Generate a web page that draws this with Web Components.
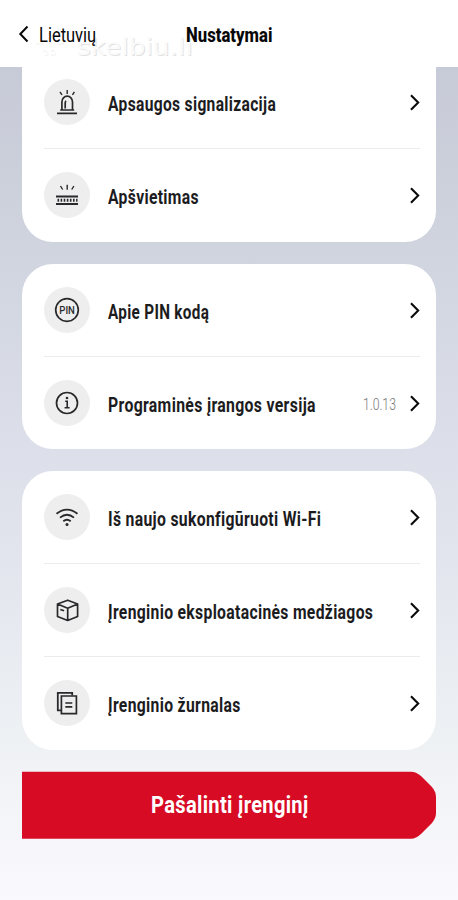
<!DOCTYPE html>
<html lang="lt">
<head>
<meta charset="utf-8">
<title>Nustatymai</title>
<style>
body{margin:0;font-family:Roboto,"Liberation Sans",sans-serif;color:#1c1c1e;font-variant-ligatures:none}
</style>
</head>
<body>
<settings-screen></settings-screen>
<script>
// Single-line text condensed horizontally to a given width.
class FitText extends HTMLElement{
  connectedCallback(){
    const w=parseFloat(this.getAttribute('width'));
    const root=this.attachShadow({mode:'open'});
    root.innerHTML=`<style>:host{display:block;flex:none;white-space:nowrap;width:${w}px}
      span{display:inline-block;transform-origin:0 50%}</style><span><slot></slot></span>`;
    const s=root.querySelector('span');
    s.style.transform=`scaleX(${w/s.offsetWidth})`;
  }
}
customElements.define('fit-text',FitText);

const icons={
  back:'<path d="M17.500 3.5 10.300 11l7.200 7.500" stroke-width="2"/>',
  next:'<path d="M8 4.2 15.2 11.500 8 18.8" stroke-width="2.1"/>',
  alarm:'<path d="M6 27.300h20" stroke-width="1.800"/><path d="M9.200 24h14M10.900 24V16a5.300 5.800 0 0 1 10.600 0V24M14.200 22.500v-5.500q0-1.500 1-2" stroke-width="1.700"/><path d="M16.200 4v4M9 6l2 2.800M23.400 6l-2 2.800" stroke-width="1.400"/>',
  light:'<path d="M5 17.500h22M5 25h22" stroke-width="1.900"/><path d="M6.500 21.300h20" stroke-width="3" stroke-dasharray="1.600 1.500"/><path d="M9.500 7l2.200 3.500M16.200 5.800v5M22.900 7l-2.200 3.500" stroke-width="1.400"/>',
  pin:'<circle cx="16" cy="16" r="11.300" stroke-width="1.700"/><text x="8.300" y="20" textLength="15.600" lengthAdjust="spacingAndGlyphs" font-family="Roboto" font-weight="500" font-size="11.500" fill="currentColor" stroke="none">PIN</text>',
  info:'<circle cx="16" cy="16" r="10.500" stroke-width="1.700"/><path d="M14.200 14.300h2v6.200M13.600 20.700h5" stroke-width="1.600"/><circle cx="16" cy="11" r="1.300" fill="currentColor" stroke="none"/>',
  wifi:'<path d="M5.500 12.700q10.500-8.200 21 0M9 16.600q7-5.800 14 0M12.300 20.200q3.700-3 7.400 0" stroke-width="1.800"/><circle cx="16" cy="23.400" r="1.500" fill="currentColor" stroke="none"/>',
  box:'<path d="M16.700 6.200 26.600 10v12.500L16.700 26.500 6.500 22.500V10zM6.500 10l10.200 4.300L26.600 10M16.700 14.300v12.200M9.300 15.500l3.800 1.300" stroke-width="1.700" stroke-linejoin="round"/>',
  log:'<path d="M10 23.300H6.800V5.800h14.400v2.700" stroke-width="1.800"/><path d="M10.400 9h15v17.700h-15zM14.300 16h7M14.300 19.800h7" stroke-width="1.700"/>'
};
class UiIcon extends HTMLElement{
  connectedCallback(){
    const n=this.getAttribute('name'),v=(n==='next'||n==='back')?23:32;
    this.attachShadow({mode:'open'}).innerHTML=`<style>:host{display:block;flex:none;width:${v}px;height:${v}px}svg{display:block}</style>
    <svg width="${v}" height="${v}" viewBox="0 0 ${v} ${v}" fill="none" stroke="currentColor">${icons[n]}</svg>`;
  }
}
customElements.define('ui-icon',UiIcon);

class SettingsRow extends HTMLElement{
  connectedCallback(){
    this.attachShadow({mode:'open'}).innerHTML=`<style>
    :host{display:flex;box-sizing:border-box;height:93px;align-items:flex-start;border-bottom:1.500px solid #ececee}
    :host(:last-child){border-bottom:0}
    .disc{width:46px;height:46px;margin:23px 18px 0 0;border-radius:50%;background:#eee;display:grid;place-items:center;flex:none;color:#29292c}
    .label{font-size:19.500px;line-height:24px;font-weight:700;letter-spacing:.4px;padding-top:37px;flex:1}
    .value{font-size:17px;line-height:24px;font-weight:300;color:#777;padding:35px 7px 0 0}
    .next{padding-top:35px;margin-right:-6px;color:#0c0c0e}
    </style>
    <div class="disc"><ui-icon name="${this.getAttribute('icon')}"></ui-icon></div>
    <div class="label"><slot></slot></div><div class="value"><slot name="value"></slot></div>
    <div class="next"><ui-icon name="next"></ui-icon></div>`;
  }
}
customElements.define('settings-row',SettingsRow);

class SettingsCard extends HTMLElement{
  connectedCallback(){
    this.attachShadow({mode:'open'}).innerHTML=`<style>
    :host{display:block;box-sizing:border-box;background:#fff;border-radius:31px;padding:0 16px 0 22px;overflow:hidden}
    :host([continued]){border-radius:0 0 31px 31px}
    </style><slot></slot>`;
  }
}
customElements.define('settings-card',SettingsCard);

class NavHeader extends HTMLElement{
  connectedCallback(){
    this.attachShadow({mode:'open'}).innerHTML=`<style>
    :host{display:flex;position:relative;box-sizing:border-box;height:67px;background:#fff;color:#080808;padding:23px 0 0 10px;font-size:19.500px;line-height:25px}
    .back{display:flex;width:176px;gap:6px;position:relative}
    .title{font-weight:800;position:relative}
    .mark{position:absolute;left:77px;top:38px;font:400 23px/18px "DejaVu Sans",sans-serif;color:#fafafa;text-shadow:.8px .8px 0 #e2e2e2}
    .logo{position:absolute;left:34px;top:38px;color:#efefef}
    </style>
    <svg class="logo" width="32" height="22" fill="none" stroke="currentColor"><path d="M2 6h8M13 5h5M23 6h7M9 13q3-1 5 2M17 13q3-1 4 1M11 17q3 1 4-1M17 17q3 1 5-1"/></svg>
    <div class="mark"><fit-text width="116">skelbiu.li</fit-text></div>
    <div class="back"><ui-icon name="back"></ui-icon><fit-text width="57.500">Lietuvių</fit-text></div>
    <fit-text class="title" width="86.500">Nustatymai</fit-text>`;
  }
}
customElements.define('nav-header',NavHeader);

class DangerButton extends HTMLElement{
  connectedCallback(){
    this.attachShadow({mode:'open'}).innerHTML=`<style>
    :host{display:grid;grid-template:68px/414px;width:414px;color:#fff;font-size:24.500px;line-height:30px;font-weight:700;letter-spacing:.4px}
    svg,div{grid-area:1/1}
    div{display:flex;align-items:center;padding:0 0 1px 128.500px}
    </style>
    <svg width="414" height="68"><path d="M0 .700H389Q394 .700 399 5L409.500 15.500Q414 20.500 414 26V42Q414 47.500 409.500 52.500L399 63Q394 67.700 389 67.700H0Z" fill="#d70c24"/></svg>
    <div><slot></slot></div>`;
  }
}
customElements.define('danger-button',DangerButton);

class SettingsScreen extends HTMLElement{
  connectedCallback(){
    this.attachShadow({mode:'open'}).innerHTML=`<style>
    :host{display:block;height:900px;overflow:hidden;background:linear-gradient(#c7cad7 67px,#ced3dd 230px,#dcdfe9 440px,#e2e5ed 560px,#eef1f4 740px,#f7f7fb 850px,#fafafe 900px)}
    main{display:flex;flex-direction:column;padding:0 22px}
    .a{height:175px;padding-top:12px}
    .b{height:185px;margin-top:22px}
    .c{height:279px;margin-top:22px}
    danger-button{margin-top:21px}
    </style>
    <nav-header></nav-header>
    <main>
    <settings-card class="a" continued>
      <settings-row icon="alarm" style="margin-top:-23px"><fit-text width="168">Apsaugos signalizacija</fit-text></settings-row>
      <settings-row icon="light"><fit-text width="91">Apšvietimas</fit-text></settings-row>
    </settings-card>
    <settings-card class="b">
      <settings-row icon="pin"><fit-text width="101">Apie PIN kodą</fit-text></settings-row>
      <settings-row icon="info"><fit-text width="207.500">Programinės įrangos versija</fit-text><fit-text slot="value" width="33">1.0.13</fit-text></settings-row>
    </settings-card>
    <settings-card class="c">
      <settings-row icon="wifi"><fit-text width="213">Iš naujo sukonfigūruoti Wi-Fi</fit-text></settings-row>
      <settings-row icon="box"><fit-text width="265">Įrenginio eksploatacinės medžiagos</fit-text></settings-row>
      <settings-row icon="log"><fit-text width="133">Įrenginio žurnalas</fit-text></settings-row>
    </settings-card>
    <danger-button><fit-text width="157.500">Pašalinti įrenginį</fit-text></danger-button>
    </main>`;
  }
}
customElements.define('settings-screen',SettingsScreen);
</script>
</body>
</html>
